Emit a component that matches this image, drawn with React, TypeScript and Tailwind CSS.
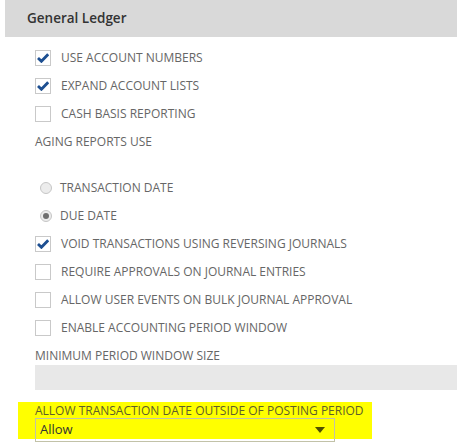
import React from 'react';

const CheckMark: React.FC = () => (
    <svg width="12" height="10" viewBox="0 0 12 10" fill="none" xmlns="http://www.w3.org/2000/svg">
        <path d="M1 5L4.4 8.3L11.2 1.2" stroke="#1d4f91" strokeWidth="2.8" strokeLinejoin="miter" />
    </svg>
);

interface CheckRowProps {
    label: string;
    checked?: boolean;
}

const CheckRow: React.FC<CheckRowProps> = ({ label, checked }) => (
    <div className="flex items-center h-[28px]">
        <span className="flex items-center justify-center w-[16px] h-[16px] border border-[#c9c9c9] bg-white">
            {checked && <CheckMark />}
        </span>
        <span className="ml-[10px] text-[12px] uppercase text-[#666]">{label}</span>
    </div>
);

interface RadioRowProps {
    label: string;
    selected?: boolean;
}

const RadioRow: React.FC<RadioRowProps> = ({ label, selected }) => (
    <div className="flex items-center h-[28px] pl-[5px]">
        <span className="flex items-center justify-center w-[12px] h-[12px] rounded-full border border-[#c6c6c6] bg-[#ececec]">
            {selected && <span className="w-[6px] h-[6px] rounded-full bg-[#6e6e6e]" />}
        </span>
        <span className="ml-[8px] text-[12px] uppercase text-[#666]">{label}</span>
    </div>
);

const App: React.FC = () => {
    return (
        <div className="w-[457px] h-[445px] bg-white overflow-hidden font-['Open_Sans',sans-serif]">
            <div className="ml-[5px] h-[37px] bg-[#d9d9d9] flex items-center pl-[22px]">
                <h2 className="text-[13.5px] font-semibold text-[#333]">General Ledger</h2>
            </div>

            <div className="pl-[35px] pt-[7px]">
                <CheckRow label="Use Account Numbers" checked />
                <CheckRow label="Expand Account Lists" checked />
                <CheckRow label="Cash Basis Reporting" />
                <div className="flex items-center h-[28px] text-[12px] uppercase text-[#666]">Aging Reports Use</div>

                <div className="mt-[18px]">
                    <RadioRow label="Transaction Date" />
                    <RadioRow label="Due Date" selected />
                </div>

                <CheckRow label="Void Transactions Using Reversing Journals" checked />
                <CheckRow label="Require Approvals on Journal Entries" />
                <CheckRow label="Allow User Events on Bulk Journal Approval" />
                <CheckRow label="Enable Accounting Period Window" />

                <div className="mt-[6px] h-[16px] leading-[16px] text-[12px] uppercase text-[#666]">Minimum Period Window Size</div>
                <div className="mt-px h-[25px] bg-[#e8e8e8]" />
            </div>

            <div className="mt-[12px] ml-[18px] w-[354px] h-[37px] bg-[#ffff00] pl-[17px] pt-[1px]">
                <div className="h-[15px] leading-[15px] text-[12px] uppercase text-[#5e5e2a]">Allow Transaction Date Outside of Posting Period</div>
                <div className="w-[300px] h-[24px] border border-[#c2c2a8] flex items-center justify-between pl-[4px] pr-[9px]">
                    <span className="text-[13px] text-[#333]">Allow</span>
                    <span className="w-0 h-0 border-l-[5px] border-r-[5px] border-t-[6px] border-l-transparent border-r-transparent border-t-[#505000]" />
                </div>
            </div>
        </div>
    );
};

export default App;
